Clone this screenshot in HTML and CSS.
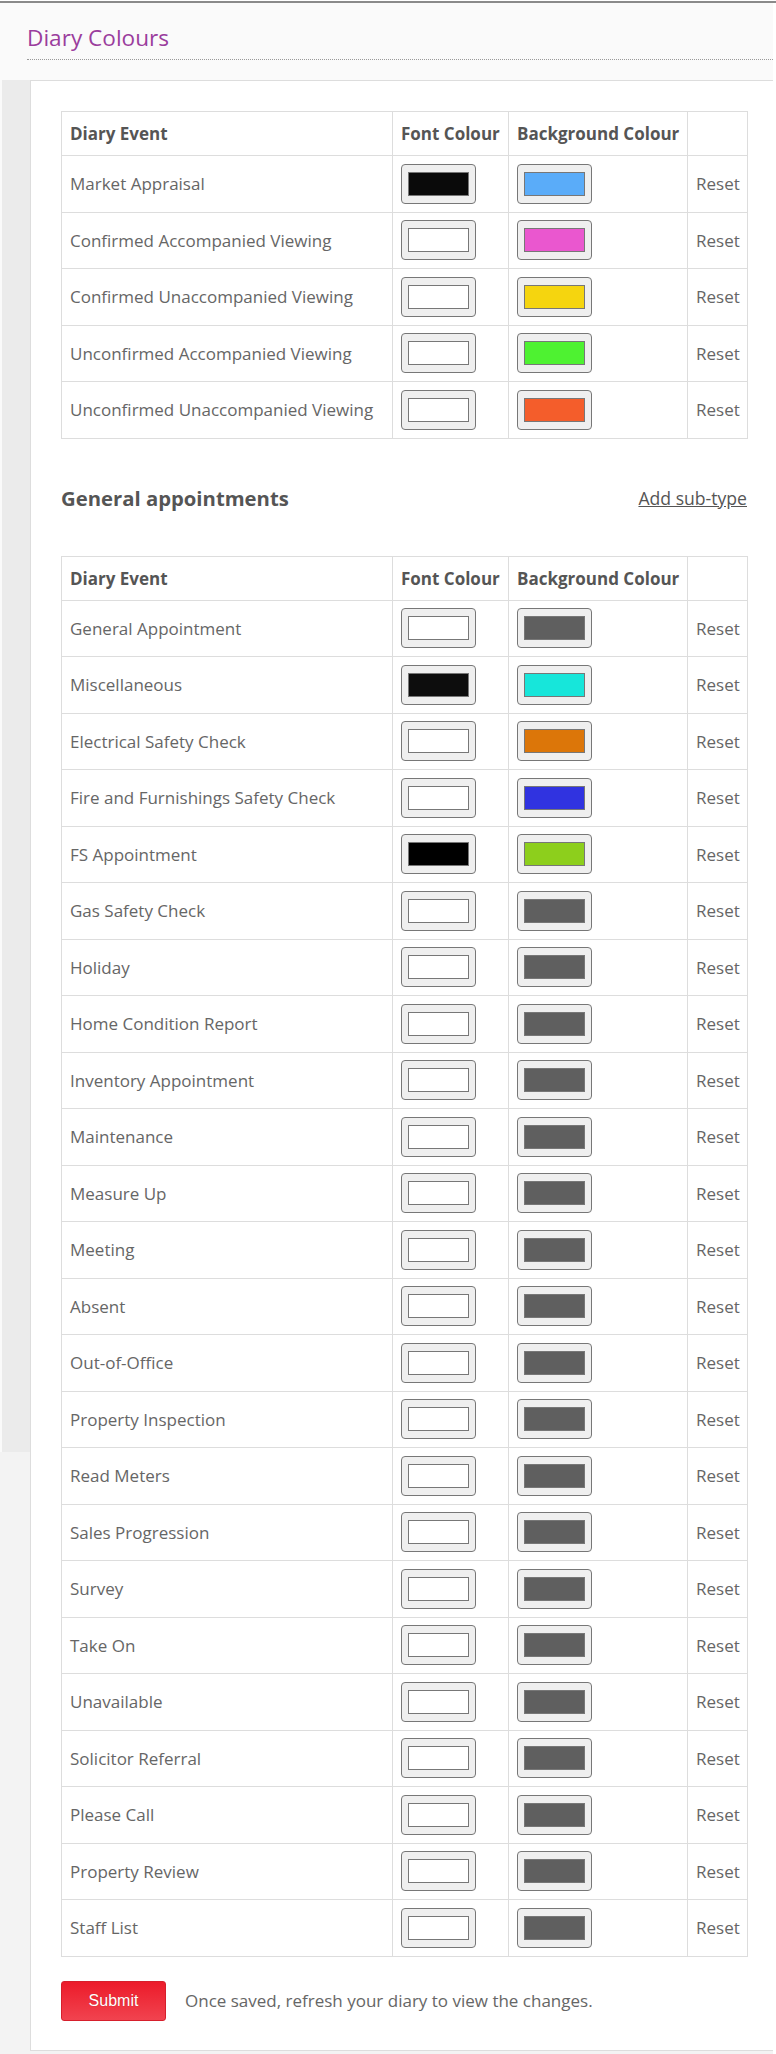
FILE: index.html
```
<!doctype html>
<html lang="en">
<head>
    <meta charset="UTF-8">
    <title>Diary Colours</title>
    <link rel="stylesheet" href="styles.css">
</head>
<body>
<div class="topline"></div>
<div class="page">
    <div class="head">
        <h1>Diary Colours</h1>
    </div>
    <div class="main">
        <div class="side"><div class="side-fill"></div></div>
        <div class="panel">
            <table class="colours">
                <colgroup>
                    <col class="c-name">
                    <col class="c-font">
                    <col class="c-bg">
                    <col class="c-reset">
                </colgroup>
                <tr class="hrow">
                    <th>Diary Event</th>
                    <th>Font Colour</th>
                    <th>Background Colour</th>
                    <th></th>
                </tr>
                <tr>
                    <td>Market Appraisal</td>
                    <td><span class="swatch"><span style="background:#0a0a0a"></span></span></td>
                    <td><span class="swatch"><span style="background:#5aacf9"></span></span></td>
                    <td class="reset">Reset</td>
                </tr>
                <tr>
                    <td>Confirmed Accompanied Viewing</td>
                    <td><span class="swatch"><span style="background:#fff"></span></span></td>
                    <td><span class="swatch"><span style="background:#ea57cf"></span></span></td>
                    <td class="reset">Reset</td>
                </tr>
                <tr>
                    <td>Confirmed Unaccompanied Viewing</td>
                    <td><span class="swatch"><span style="background:#fff"></span></span></td>
                    <td><span class="swatch"><span style="background:#f5d50f"></span></span></td>
                    <td class="reset">Reset</td>
                </tr>
                <tr>
                    <td>Unconfirmed Accompanied Viewing</td>
                    <td><span class="swatch"><span style="background:#fff"></span></span></td>
                    <td><span class="swatch"><span style="background:#4ef231"></span></span></td>
                    <td class="reset">Reset</td>
                </tr>
                <tr>
                    <td>Unconfirmed Unaccompanied Viewing</td>
                    <td><span class="swatch"><span style="background:#fff"></span></span></td>
                    <td><span class="swatch"><span style="background:#f45d2b"></span></span></td>
                    <td class="reset">Reset</td>
                </tr>
            </table>

            <div class="section">
                <h2>General appointments</h2>
                <a href="#" class="add">Add sub-type</a>
            </div>

            <table class="colours">
                <colgroup>
                    <col class="c-name">
                    <col class="c-font">
                    <col class="c-bg">
                    <col class="c-reset">
                </colgroup>
                <tr class="hrow">
                    <th>Diary Event</th>
                    <th>Font Colour</th>
                    <th>Background Colour</th>
                    <th></th>
                </tr>
                <tr>
                    <td>General Appointment</td>
                    <td><span class="swatch"><span style="background:#fff"></span></span></td>
                    <td><span class="swatch"><span style="background:#5f5f5f"></span></span></td>
                    <td class="reset">Reset</td>
                </tr>
                <tr>
                    <td>Miscellaneous</td>
                    <td><span class="swatch"><span style="background:#0d0d0d"></span></span></td>
                    <td><span class="swatch"><span style="background:#17e6da"></span></span></td>
                    <td class="reset">Reset</td>
                </tr>
                <tr>
                    <td>Electrical Safety Check</td>
                    <td><span class="swatch"><span style="background:#fff"></span></span></td>
                    <td><span class="swatch"><span style="background:#dc7609"></span></span></td>
                    <td class="reset">Reset</td>
                </tr>
                <tr>
                    <td>Fire and Furnishings Safety Check</td>
                    <td><span class="swatch"><span style="background:#fff"></span></span></td>
                    <td><span class="swatch"><span style="background:#3033e0"></span></span></td>
                    <td class="reset">Reset</td>
                </tr>
                <tr>
                    <td>FS Appointment</td>
                    <td><span class="swatch"><span style="background:#000"></span></span></td>
                    <td><span class="swatch"><span style="background:#8dcf1c"></span></span></td>
                    <td class="reset">Reset</td>
                </tr>
                <tr>
                    <td>Gas Safety Check</td>
                    <td><span class="swatch"><span style="background:#fff"></span></span></td>
                    <td><span class="swatch"><span style="background:#5f5f5f"></span></span></td>
                    <td class="reset">Reset</td>
                </tr>
                <tr>
                    <td>Holiday</td>
                    <td><span class="swatch"><span style="background:#fff"></span></span></td>
                    <td><span class="swatch"><span style="background:#5f5f5f"></span></span></td>
                    <td class="reset">Reset</td>
                </tr>
                <tr>
                    <td>Home Condition Report</td>
                    <td><span class="swatch"><span style="background:#fff"></span></span></td>
                    <td><span class="swatch"><span style="background:#5f5f5f"></span></span></td>
                    <td class="reset">Reset</td>
                </tr>
                <tr>
                    <td>Inventory Appointment</td>
                    <td><span class="swatch"><span style="background:#fff"></span></span></td>
                    <td><span class="swatch"><span style="background:#5f5f5f"></span></span></td>
                    <td class="reset">Reset</td>
                </tr>
                <tr>
                    <td>Maintenance</td>
                    <td><span class="swatch"><span style="background:#fff"></span></span></td>
                    <td><span class="swatch"><span style="background:#5f5f5f"></span></span></td>
                    <td class="reset">Reset</td>
                </tr>
                <tr>
                    <td>Measure Up</td>
                    <td><span class="swatch"><span style="background:#fff"></span></span></td>
                    <td><span class="swatch"><span style="background:#5f5f5f"></span></span></td>
                    <td class="reset">Reset</td>
                </tr>
                <tr>
                    <td>Meeting</td>
                    <td><span class="swatch"><span style="background:#fff"></span></span></td>
                    <td><span class="swatch"><span style="background:#5f5f5f"></span></span></td>
                    <td class="reset">Reset</td>
                </tr>
                <tr>
                    <td>Absent</td>
                    <td><span class="swatch"><span style="background:#fff"></span></span></td>
                    <td><span class="swatch"><span style="background:#5f5f5f"></span></span></td>
                    <td class="reset">Reset</td>
                </tr>
                <tr>
                    <td>Out-of-Office</td>
                    <td><span class="swatch"><span style="background:#fff"></span></span></td>
                    <td><span class="swatch"><span style="background:#5f5f5f"></span></span></td>
                    <td class="reset">Reset</td>
                </tr>
                <tr>
                    <td>Property Inspection</td>
                    <td><span class="swatch"><span style="background:#fff"></span></span></td>
                    <td><span class="swatch"><span style="background:#5f5f5f"></span></span></td>
                    <td class="reset">Reset</td>
                </tr>
                <tr>
                    <td>Read Meters</td>
                    <td><span class="swatch"><span style="background:#fff"></span></span></td>
                    <td><span class="swatch"><span style="background:#5f5f5f"></span></span></td>
                    <td class="reset">Reset</td>
                </tr>
                <tr>
                    <td>Sales Progression</td>
                    <td><span class="swatch"><span style="background:#fff"></span></span></td>
                    <td><span class="swatch"><span style="background:#5f5f5f"></span></span></td>
                    <td class="reset">Reset</td>
                </tr>
                <tr>
                    <td>Survey</td>
                    <td><span class="swatch"><span style="background:#fff"></span></span></td>
                    <td><span class="swatch"><span style="background:#5f5f5f"></span></span></td>
                    <td class="reset">Reset</td>
                </tr>
                <tr>
                    <td>Take On</td>
                    <td><span class="swatch"><span style="background:#fff"></span></span></td>
                    <td><span class="swatch"><span style="background:#5f5f5f"></span></span></td>
                    <td class="reset">Reset</td>
                </tr>
                <tr>
                    <td>Unavailable</td>
                    <td><span class="swatch"><span style="background:#fff"></span></span></td>
                    <td><span class="swatch"><span style="background:#5f5f5f"></span></span></td>
                    <td class="reset">Reset</td>
                </tr>
                <tr>
                    <td>Solicitor Referral</td>
                    <td><span class="swatch"><span style="background:#fff"></span></span></td>
                    <td><span class="swatch"><span style="background:#5f5f5f"></span></span></td>
                    <td class="reset">Reset</td>
                </tr>
                <tr>
                    <td>Please Call</td>
                    <td><span class="swatch"><span style="background:#fff"></span></span></td>
                    <td><span class="swatch"><span style="background:#5f5f5f"></span></span></td>
                    <td class="reset">Reset</td>
                </tr>
                <tr>
                    <td>Property Review</td>
                    <td><span class="swatch"><span style="background:#fff"></span></span></td>
                    <td><span class="swatch"><span style="background:#5f5f5f"></span></span></td>
                    <td class="reset">Reset</td>
                </tr>
                <tr>
                    <td>Staff List</td>
                    <td><span class="swatch"><span style="background:#fff"></span></span></td>
                    <td><span class="swatch"><span style="background:#5f5f5f"></span></span></td>
                    <td class="reset">Reset</td>
                </tr>
            </table>

            <div class="actions">
                <button type="button" class="btn-submit">Submit</button>
                <span class="note">Once saved, refresh your diary to view the changes.</span>
            </div>
        </div>
    </div>
</div>
</body>
</html>
```

FILE: styles.css
```
* {
    margin: 0;
    padding: 0;
}

body {
    background-color: #fff;
    font-family: "Open Sans", "Noto Sans", sans-serif;
    color: #666;
    padding-top: 1px;
}

.topline {
    height: 2px;
    background-color: #8a8a8a;
}

.page {
    width: 773px;
    background-color: #f3f3f3;
    padding-bottom: 4px;
}

/* 标题栏 */
.head {
    background-color: #fafafa;
    padding: 0 0 20px 27px;
}

.head h1 {
    font-size: 22.6px;
    font-weight: normal;
    line-height: 30px;
    color: #9a3d9d;
    padding: 20px 0 6px;
    border-bottom: 1px dotted #999;
}

.main {
    display: flex;
}

.side {
    width: 30px;
    flex-shrink: 0;
}

.side-fill {
    height: 1372px;
    background-color: #ebebeb;
    border-left: 2px solid #fafafa;
}

.panel {
    flex: 1;
    background-color: #fff;
    border: 1px solid #ddd;
    border-right: none;
    padding: 30px 0 29px 30px;
}

/* 颜色表格 */
.colours {
    width: 686px;
    table-layout: fixed;
    border-collapse: collapse;
    font-size: 17px;
}

.c-name { width: 331px; }
.c-font { width: 116px; }
.c-bg { width: 179px; }
.c-reset { width: 60px; }

.colours th,
.colours td {
    border: 1px solid #ddd;
    padding: 0 8px;
    text-align: left;
    vertical-align: middle;
    white-space: nowrap;
}

.colours tr {
    height: 56.5px;
}

.colours tr.hrow {
    height: 44px;
}

.colours th {
    font-weight: bold;
    color: #555;
}

.colours td {
    color: #666;
}

.swatch {
    display: inline-block;
    vertical-align: middle;
    width: 75px;
    height: 40px;
    box-sizing: border-box;
    border: 1px solid #777;
    border-radius: 4px;
    background-color: #efefef;
    padding: 7px 6px;
}

.swatch span {
    display: block;
    height: 24px;
    box-sizing: border-box;
    border: 1px solid #777;
}

.section {
    width: 686px;
    display: flex;
    justify-content: space-between;
    align-items: center;
    padding: 45px 0 44px;
}

.section h2 {
    font-size: 20.3px;
    line-height: 28px;
    font-weight: bold;
    color: #555;
}

.add {
    font-size: 17.6px;
    color: #555;
    text-decoration: underline;
}

.actions {
    display: flex;
    align-items: center;
    gap: 19px;
    margin-top: 24px;
}

.btn-submit {
    width: 105px;
    height: 40px;
    border: 1px solid #d61f2c;
    border-radius: 3px;
    background: linear-gradient(#ec1b2a, #f1434f);
    color: #fff;
    font-family: "Liberation Sans", Arial, sans-serif;
    font-size: 16px;
    text-shadow: 0 0 1px rgba(120, 0, 0, 0.4);
    outline: none;
}

.note {
    font-size: 17px;
    color: #666;
}
```
